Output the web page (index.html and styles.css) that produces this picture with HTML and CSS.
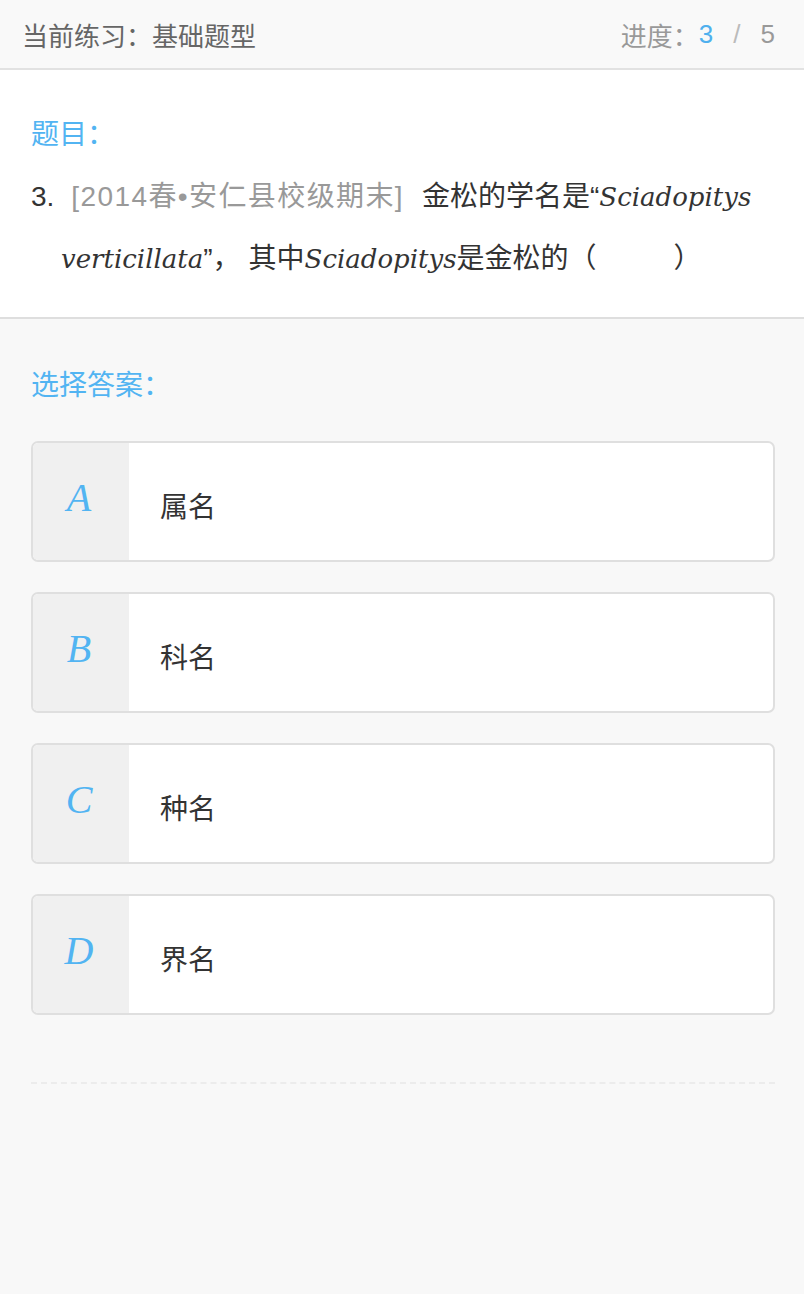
FILE: index.html
```html
<!DOCTYPE html>
<html lang="zh">
<head>
<meta charset="utf-8">
<link rel="stylesheet" href="styles.css">
</head>
<body>
<header class="topbar">
  <div class="practice">当前练习：基础题型</div>
  <div class="progress">进度：<span class="cur">3</span><span class="sep">/</span><span class="total">5</span></div>
</header>
<section class="question">
  <div class="label">题目：</div>
  <p class="stem"><span class="num">3.</span><span class="src">[2014春•安仁县校级期末]</span><span class="body">金松的学名是“<span class="math">Sciadopitys verticillata</span>”<span class="comma">，</span>其中<span class="math">Sciadopitys</span>是金松的（<span class="blank"></span>）</span></p>
</section>
<section class="answers">
  <div class="label">选择答案：</div>
  <div class="options">
    <div class="option"><div class="letter">A</div><div class="text">属名</div></div>
    <div class="option"><div class="letter">B</div><div class="text">科名</div></div>
    <div class="option"><div class="letter">C</div><div class="text">种名</div></div>
    <div class="option"><div class="letter">D</div><div class="text">界名</div></div>
  </div>
  <div class="divider"></div>
</section>
</body>
</html>
```
FILE: styles.css
```css
html, body {
  margin: 0;
  padding: 0;
}
body {
  background: #f8f8f8;
  font-family: "Liberation Sans", "Noto Sans CJK SC", sans-serif;
  color: #333;
  height: 1294px;
}
.topbar {
  height: 70px;
  box-sizing: border-box;
  border-bottom: 2px solid #e2e2e2;
  background: #f9f9f9;
  display: flex;
  align-items: center;
  justify-content: space-between;
  padding: 0 29px 0 22px;
  font-size: 26px;
}
.practice {
  color: #666;
}
.progress {
  color: #999;
  display: flex;
  align-items: center;
}
.progress .cur {
  color: #4fb0ee;
}
.progress .sep {
  margin: 0 20px;
  color: #bbb;
}
.question {
  background: #fff;
  padding: 40px 28px 0 31px;
  height: 249px;
  box-sizing: border-box;
  border-bottom: 2px solid #dedede;
}
.label {
  color: #52b4f2;
  font-size: 28px;
  line-height: 50px;
}
.stem {
  margin: 6px 0 0 0;
  font-size: 28px;
  line-height: 61px;
  padding-left: 30px;
  text-indent: -30px;
  color: #333;
}
.num {
  margin-right: 17px;
}
.src {
  color: #999;
  letter-spacing: 1.4px;
  margin-right: 18px;
}
.math {
  font-family: "DejaVu Serif", serif;
  font-style: italic;
  font-size: 26px;
}
.comma {
  margin-right: 8px;
}
.blank {
  display: inline-block;
  width: 77px;
}
.answers {
  padding: 42px 29px 0 31px;
}
.options {
  margin-top: 30px;
  display: flex;
  flex-direction: column;
  gap: 30px;
}
.option {
  height: 121px;
  box-sizing: border-box;
  border: 2px solid #dfdfdf;
  border-radius: 7px;
  display: flex;
  overflow: hidden;
  background: #fff;
}
.letter {
  width: 96px;
  background: #f0f0f0;
  color: #52b4f2;
  font-family: "Liberation Serif", serif;
  font-style: italic;
  font-size: 40px;
  display: flex;
  align-items: center;
  justify-content: center;
  padding-bottom: 8px;
  padding-right: 4px;
  box-sizing: border-box;
}
.text {
  padding-left: 31px;
  display: flex;
  align-items: center;
  font-size: 28px;
  color: #333;
  padding-top: 6px;
}
.divider {
  margin-top: 67px;
  border-top: 2px dashed #ececec;
}
```
